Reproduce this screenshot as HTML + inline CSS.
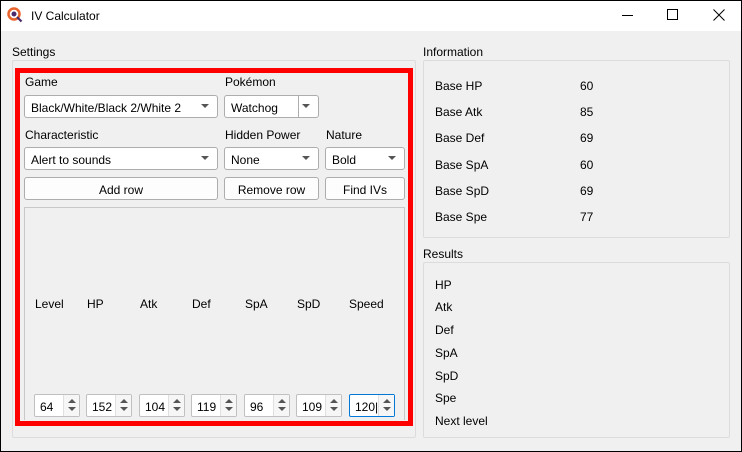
<!DOCTYPE html>
<html><head><meta charset="utf-8"><style>
*{box-sizing:border-box;margin:0;padding:0}
body{width:742px;height:452px;overflow:hidden;background:#fff;font-family:"Liberation Sans",sans-serif;font-size:12px;color:#000;position:relative}
.win{position:absolute;left:0;top:0;width:742px;height:452px;background:#f0f0f0}
.bd{position:absolute;left:0;top:0;width:742px;height:452px;border:1px solid #000;pointer-events:none}
.tb{position:absolute;left:0;top:0;width:742px;height:31px;background:#fff}
.a{position:absolute;white-space:nowrap}
.t{margin:1px 0 0 1px}
.grp{position:absolute;border:1px solid #dcdcdc;border-radius:2px}
.cb{position:absolute;height:23px;border:1px solid #adadad;border-radius:3px;background:#fff;padding:5px 0 0 6px}
.cb:after{content:"";position:absolute;right:8px;top:8px;border-left:4px solid transparent;border-right:4px solid transparent;border-top:4px solid #555}
.btn{position:absolute;height:23px;border:1px solid #adadad;border-radius:3px;background:#fdfdfd;text-align:center;padding-top:5px}
.sp{position:absolute;top:394px;width:46px;height:23px;border:1px solid #c0c0c0;border-radius:2px;background:#fff;padding:5px 0 0 5px}
.sp i{position:absolute;right:0;top:0;width:16px;height:21px;border-left:1px solid #e0e0e0;background:#f6f6f6}
.sp i:before{content:"";position:absolute;left:4px;top:4px;border-left:4px solid transparent;border-right:4px solid transparent;border-bottom:4px solid #555}
.sp i:after{content:"";position:absolute;left:4px;top:12px;border-left:4px solid transparent;border-right:4px solid transparent;border-top:4px solid #555}
</style></head><body><div class="win">
<div class="tb"></div>
<svg class="a" style="left:7px;top:7px" width="16" height="16" viewBox="0 0 16 16"><circle cx="7" cy="7" r="5.5" fill="none" stroke="#e8632b" stroke-width="2.5"/><circle cx="7" cy="7" r="2.5" fill="#4a2a6a"/><line x1="10" y1="10" x2="14.5" y2="14.5" stroke="#4a2a6a" stroke-width="2.2"/></svg>
<div class="a t" style="left:30px;top:8px;font-size:12px">IV Calculator</div>
<div class="a" style="left:622px;top:15px;width:11px;height:1px;background:#000"></div>
<div class="a" style="left:667px;top:9px;width:11px;height:11px;border:1px solid #000"></div>
<svg class="a" style="left:713px;top:9px" width="12" height="12"><path d="M0.5 0.5L11.5 11.5M11.5 0.5L0.5 11.5" stroke="#000" stroke-width="1"/></svg>

<div class="a t" style="left:11px;top:44px">Settings</div>
<div class="grp" style="left:12px;top:60px;width:404px;height:378px"></div>
<div class="a" style="left:15px;top:68px;width:398px;height:358px;border:5px solid #f00"></div>
<div class="a t" style="left:24px;top:74px">Game</div>
<div class="a t" style="left:224px;top:74px">Pokémon</div>
<div class="cb" style="left:24px;top:95px;width:194px">Black/White/Black 2/White 2</div>
<div class="cb" style="left:224px;top:95px;width:95px">Watchog<span style="position:absolute;left:73px;top:0;width:1px;height:21px;background:#adadad"></span></div>
<div class="a t" style="left:24px;top:127px">Characteristic</div>
<div class="a t" style="left:224px;top:127px">Hidden Power</div>
<div class="a t" style="left:325px;top:127px">Nature</div>
<div class="cb" style="left:24px;top:147px;width:194px">Alert to sounds</div>
<div class="cb" style="left:224px;top:147px;width:95px">None</div>
<div class="cb" style="left:325px;top:147px;width:80px">Bold</div>
<div class="btn" style="left:24px;top:177px;width:194px">Add row</div>
<div class="btn" style="left:224px;top:177px;width:95px">Remove row</div>
<div class="btn" style="left:325px;top:177px;width:80px">Find IVs</div>
<div class="a" style="left:24px;top:207px;width:381px;height:213px;border:1px solid #c8c8c8;border-bottom:none"></div>
<div class="a t" style="left:34px;top:296px">Level</div>
<div class="a t" style="left:86px;top:296px">HP</div>
<div class="a t" style="left:139px;top:296px">Atk</div>
<div class="a t" style="left:191px;top:296px">Def</div>
<div class="a t" style="left:244px;top:296px">SpA</div>
<div class="a t" style="left:296px;top:296px">SpD</div>
<div class="a t" style="left:348px;top:296px">Speed</div>
<div class="sp" style="left:34px">64<i></i></div>
<div class="sp" style="left:86px">152<i></i></div>
<div class="sp" style="left:139px">104<i></i></div>
<div class="sp" style="left:191px">119<i></i></div>
<div class="sp" style="left:244px">96<i></i></div>
<div class="sp" style="left:296px">109<i></i></div>
<div class="sp" style="left:349px;border-color:#0078d7">120|<i></i></div>

<div class="a t" style="left:422px;top:44px">Information</div>
<div class="grp" style="left:423px;top:60px;width:307px;height:178px"></div>
<div class="a t" style="left:434px;top:78px">Base HP</div><div class="a t" style="left:579px;top:78px">60</div>
<div class="a t" style="left:434px;top:104px">Base Atk</div><div class="a t" style="left:579px;top:104px">85</div>
<div class="a t" style="left:434px;top:130px">Base Def</div><div class="a t" style="left:579px;top:130px">69</div>
<div class="a t" style="left:434px;top:157px">Base SpA</div><div class="a t" style="left:579px;top:157px">60</div>
<div class="a t" style="left:434px;top:183px">Base SpD</div><div class="a t" style="left:579px;top:183px">69</div>
<div class="a t" style="left:434px;top:209px">Base Spe</div><div class="a t" style="left:579px;top:209px">77</div>
<div class="a t" style="left:422px;top:246px">Results</div>
<div class="grp" style="left:423px;top:262px;width:307px;height:176px"></div>
<div class="a t" style="left:434px;top:277px">HP</div>
<div class="a t" style="left:434px;top:299px">Atk</div>
<div class="a t" style="left:434px;top:322px">Def</div>
<div class="a t" style="left:434px;top:345px">SpA</div>
<div class="a t" style="left:434px;top:368px">SpD</div>
<div class="a t" style="left:434px;top:390px">Spe</div>
<div class="a t" style="left:434px;top:413px">Next level</div>
</div><div class="bd"></div></body></html>
